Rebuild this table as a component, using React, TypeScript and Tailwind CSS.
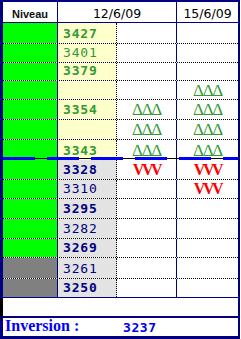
import React from "react";

type Row = {
  h: string;
  n: string;
  bold?: boolean;
  navy?: boolean;
  gray?: boolean;
  c3?: "up" | "down";
  c4?: "up" | "down";
  edge?: "none" | "solid";
};

const rows: Row[] = [
  { h: "h-[21px]", n: "3427", bold: true },
  { h: "h-[19px]", n: "3401" },
  { h: "h-[18px]", n: "3379", bold: true },
  { h: "h-[19px]", n: "", c4: "up" },
  { h: "h-[20px]", n: "3354", bold: true, c3: "up", c4: "up" },
  { h: "h-[20px]", n: "", c3: "up", c4: "up" },
  { h: "h-[20px]", n: "3343", bold: true, c3: "up", c4: "up", edge: "none" },
  { h: "h-[20px]", n: "3328", bold: true, navy: true, c3: "down", c4: "down" },
  { h: "h-[19px]", n: "3310", navy: true, c4: "down" },
  { h: "h-[20px]", n: "3295", bold: true, navy: true },
  { h: "h-[20px]", n: "3282", navy: true },
  { h: "h-[19px]", n: "3269", bold: true, navy: true },
  { h: "h-[21px]", n: "3261", navy: true, gray: true },
  { h: "h-[19px]", n: "3250", bold: true, navy: true, gray: true, edge: "solid" },
];

const mono = "font-['DejaVu_Sans_Mono',monospace]";

function Signal({ kind }: { kind?: "up" | "down" }) {
  if (kind === "up")
    return (
      <span className="font-['Liberation_Serif',serif] text-[17px] leading-none tracking-[-1.3px] text-[#2f9a2f]">
        ΔΔΔ
      </span>
    );
  if (kind === "down")
    return (
      <span className="font-['Liberation_Serif',serif] font-bold text-[16px] leading-none tracking-[-2.4px] text-[#ff0000]">
        VVV
      </span>
    );
  return null;
}

export default function App() {
  return (
    <div className="w-[241px] h-[339px] bg-white">
      <div className="w-[240px] border-t-2 border-r-2 border-b-[3px] border-[#000080]">
        {/* header */}
        <div className="flex h-[21px] border-l-[3px] border-b border-[#000080]">
          <div className="w-[55px] border-r border-[#000080] flex items-end justify-center pb-[2px] font-['Liberation_Sans',sans-serif] font-bold text-[11px] leading-none text-[#111]">
            Niveau
          </div>
          <div className="w-[119px] border-r border-[#000080] flex items-end justify-center pb-[2px] font-['DejaVu_Sans',sans-serif] text-[12.5px] leading-none text-black">
            12/6/09
          </div>
          <div className="flex-1 flex items-end justify-center pb-[2px] font-['DejaVu_Sans',sans-serif] text-[12.5px] leading-none text-black">
            15/6/09
          </div>
        </div>

        {/* levels */}
        <div className="relative border-l-[3px] border-[#000080]">
          {rows.map((r, i) => (
            <div
              key={i}
              className={`flex ${r.h} ${
                r.edge === "none"
                  ? ""
                  : r.edge === "solid"
                  ? "border-b border-[#000080]"
                  : "border-b border-dotted border-black"
              }`}
            >
              <div className={`w-[55px] border-r border-[#000080] ${r.gray ? "bg-[#808080]" : "bg-[#00ff00]"}`} />
              <div
                className={`w-[59px] border-r border-dotted border-black flex items-end pl-[5px] pb-[3px] ${mono} text-[13px] leading-none tracking-[0.8px] ${
                  r.navy ? "bg-[#e3e3e3] text-[#000080]" : "bg-[#ffffcc] text-[#339933]"
                } ${r.bold ? "font-bold" : ""}`}
              >
                {r.n}
              </div>
              <div className="w-[60px] border-r border-[#000080] flex items-center justify-center">
                <Signal kind={r.c3} />
              </div>
              <div className="flex-1 flex items-center justify-center">
                <Signal kind={r.c4} />
              </div>
            </div>
          ))}
          {/* reversal line between 3343 and 3328 */}
          <div className="absolute left-0 right-0 top-[134px] h-[3px] bg-[linear-gradient(transparent_1px,#000_1px,#000_2px,transparent_2px)]">
            <div className="h-full bg-[repeating-linear-gradient(90deg,#0000ff_0_32px,transparent_32px_44px)]" />
          </div>
        </div>

        {/* blank */}
        <div className="h-[20px] border-l-[3px] border-l-black border-b-2 border-b-[#000080]" />

        {/* inversion */}
        <div className="flex items-start h-[18px] border-l-[3px] border-[#000080]">
          <span className="w-[114px] pl-[2px] font-['Liberation_Serif',serif] font-bold text-[16px] leading-none text-[#0000ff]">
            Inversion :
          </span>
          <span className={`pl-[6px] pt-[3px] ${mono} font-bold text-[13px] leading-none tracking-[0.6px] text-[#0000ee]`}>
            3237
          </span>
        </div>
      </div>
    </div>
  );
}
